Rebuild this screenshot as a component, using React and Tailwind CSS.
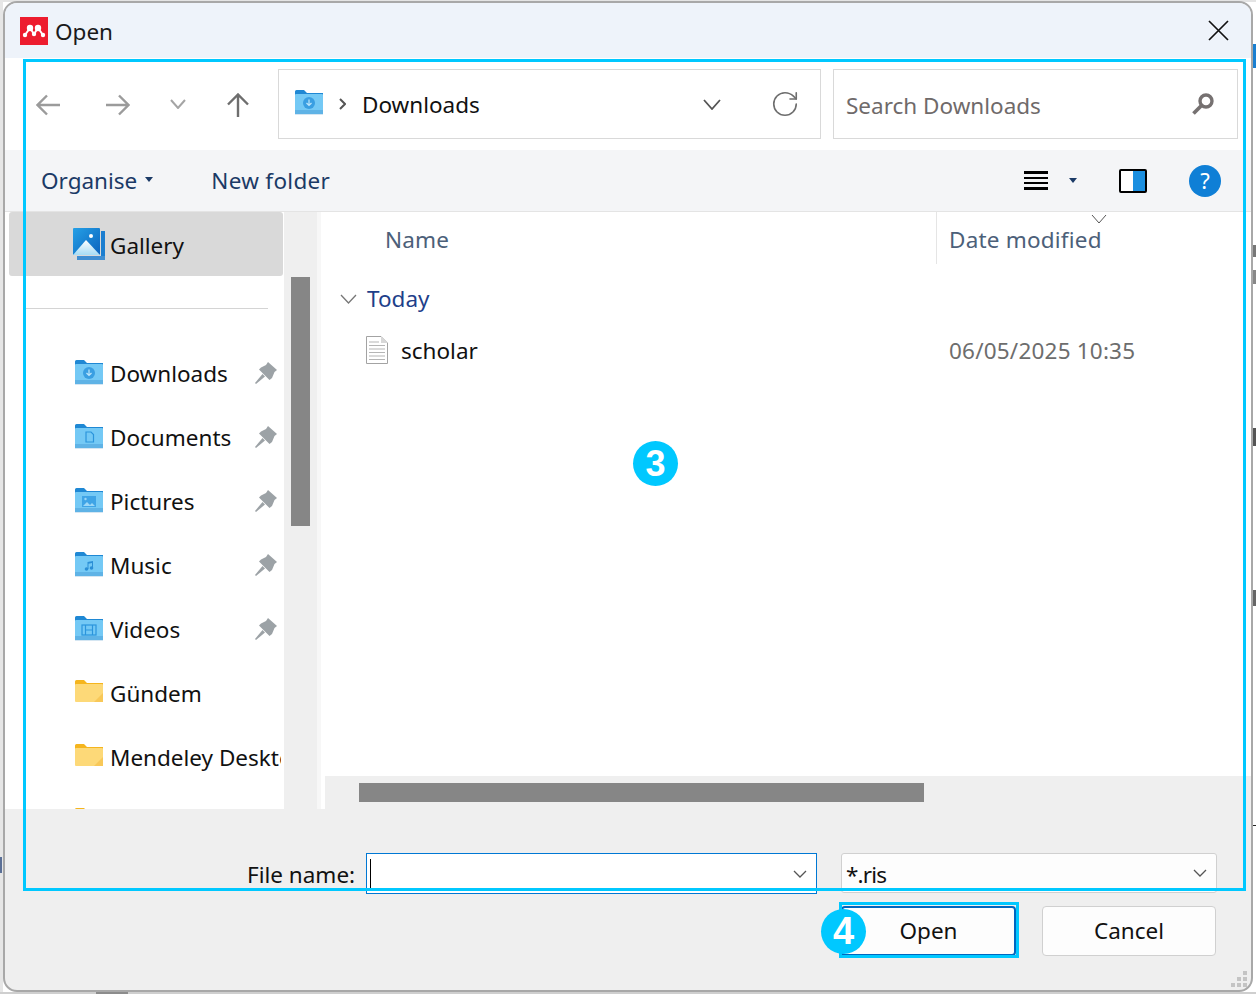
import React from "react";
import { RotateCw } from "lucide-react";

const font = { fontFamily: '"Noto Sans", sans-serif' };

// thin V chevron, sized by its drawn width
function Chev({ w = 16, color = "#555", sw = 1.3, className = "" }) {
  const h = Math.round(w * 0.6);
  return (
    <svg width={w} height={h} viewBox={`0 0 ${w} ${h}`} className={`shrink-0 ${className}`}>
      <path d={`M1 1 L${w / 2} ${h - 1} L${w - 1} 1`} fill="none" stroke={color} strokeWidth={sw} />
    </svg>
  );
}

function FolderIcon({ color = "blue", glyph }) {
  const yellow = color === "yellow";
  return (
    <svg width="28" height="26" viewBox="0 0 28 26" className="shrink-0 mb-[2px]">
      <path d="M0 1.5 Q0 0 1.5 0 H9 L12 3 H28 V8 H0 Z" fill={yellow ? "#f5b51e" : "#1f88d4"} />
      <rect x="0" y="4" width="28" height={yellow ? 18 : 20} rx="1" fill={yellow ? "#fdd978" : "#74c9f5"} />
      {!yellow && <rect x="0" y="20" width="28" height="4" fill="#5fb3e6" />}
      {!yellow && <rect x="0" y="24" width="28" height="1" fill="#d5e6f2" />}
      {yellow && <path d="M19 22 L28 13 V22 Z" fill="#f8c858" />}
      {glyph === "down" && (
        <g>
          <circle cx="14" cy="13" r="6" fill="#3a9fe2" />
          <path d="M14 9.5 V15 M11.5 13 L14 15.5 L16.5 13" stroke="#bfe6fb" strokeWidth="1.2" fill="none" />
        </g>
      )}
      {glyph === "doc" && (
        <path d="M11 8 H16 L18.5 10.5 V18 H11 Z" fill="none" stroke="#2b95dc" strokeWidth="1.2" />
      )}
      {glyph === "pic" && (
        <g>
          <rect x="7" y="8" width="14" height="11" fill="#3fa4e6" />
          <path d="M8 18 L12 14 L15 17 L17 15 L20 18 Z" fill="#9cd7f7" />
          <circle cx="10.5" cy="11" r="1.2" fill="#9cd7f7" />
        </g>
      )}
      {glyph === "music" && (
        <g fill="#2b8fd6">
          <circle cx="11.5" cy="17" r="1.8" />
          <circle cx="16.5" cy="16" r="1.8" />
          <path d="M12.5 17 V10 L18 9 V16 H17 V11 L13.5 11.7 V17 Z" />
        </g>
      )}
      {glyph === "video" && (
        <g fill="none" stroke="#2b95dc" strokeWidth="1.2">
          <rect x="7" y="9" width="14" height="10" />
          <path d="M10.5 9 V19 M17.5 9 V19 M10.5 14 H17.5" />
        </g>
      )}
    </svg>
  );
}

function PinIcon() {
  return (
    <svg width="22" height="22" viewBox="0 0 22 22" className="shrink-0 mr-[4px] mb-[3px]">
      <path d="M13 0 L22 8 L19.5 10 L17 16 L14.5 18 L4 7.5 L6 5.5 L11 3 Z" fill="#9ca2a6" />
      <path d="M7.5 12 L0 21 L1 22 L10 14.5 Z" fill="#9ca2a6" />
    </svg>
  );
}

function NavRow({ label, color, glyph, pinned }) {
  return (
    <div className="h-16 shrink-0 flex items-center pl-[70px] pr-[3px] whitespace-nowrap overflow-hidden">
      <FolderIcon color={color} glyph={glyph} />
      <span className="ml-[7px] flex-1 text-[22.5px] text-[#111] overflow-hidden">{label}</span>
      {pinned && <PinIcon />}
    </div>
  );
}

const places = [
  { label: "Downloads", glyph: "down", pinned: true },
  { label: "Documents", glyph: "doc", pinned: true },
  { label: "Pictures", glyph: "pic", pinned: true },
  { label: "Music", glyph: "music", pinned: true },
  { label: "Videos", glyph: "video", pinned: true },
  { label: "Gündem", color: "yellow" },
  { label: "Mendeley Desktop", color: "yellow" },
  { label: "", color: "yellow" },
];

export default function App() {
  return (
    <div className="relative w-[1256px] h-[994px] overflow-hidden bg-white" style={font}>
      {/* bits of the window behind the dialog */}
      <div className="absolute left-0 top-0 w-[1256px] h-[2px] bg-[#e4e4e4]" />
      <div className="absolute left-0 top-0 w-[3px] h-[994px] bg-[#e6e6e6]" />
      <div className="absolute left-0 top-[992px] w-[1256px] h-[2px] bg-[#cfcfcf]" />
      <div className="absolute left-[96px] top-[991px] w-[32px] h-[3px] bg-[#8c8c8c]" />
      <div className="absolute left-[1253px] top-[44px] w-[3px] h-[24px] bg-[#1a7fd0]" />
      <div className="absolute left-[1253px] top-[245px] w-[3px] h-[12px] bg-[#777]" />
      <div className="absolute left-[1253px] top-[270px] w-[3px] h-[14px] bg-[#888]" />
      <div className="absolute left-[1253px] top-[428px] w-[3px] h-[18px] bg-[#555]" />
      <div className="absolute left-[1253px] top-[590px] w-[3px] h-[16px] bg-[#666]" />
      <div className="absolute left-[1253px] top-[825px] w-[3px] h-[1px] bg-[#222]" />
      <div className="absolute left-0 top-[857px] w-[2px] h-[16px] bg-[#5a6f96]" />

      <div className="relative ml-[3px] mt-[1px] w-[1250px] h-[991px] rounded-[14px] border-2 border-[#a8a8a8] overflow-hidden flex flex-col bg-[#efefef]">
        {/* title bar */}
        <div className="h-[55px] shrink-0 bg-[#eef3fa] flex items-center pl-[15px] pr-[22px]">
          <svg width="28" height="28" viewBox="0 0 28 28" className="shrink-0">
            <rect width="28" height="28" fill="#ed1c2e" />
            <path d="M5 18 L10 11 L14 17 L18 11 L23 18" fill="none" stroke="#fff" strokeWidth="2" />
            <g fill="#fff">
              <circle cx="5" cy="18" r="2.2" />
              <circle cx="10" cy="11" r="3.2" />
              <circle cx="14" cy="17" r="2.2" />
              <circle cx="18" cy="11" r="3.2" />
              <circle cx="23" cy="18" r="2.2" />
            </g>
          </svg>
          <span className="ml-[7px] flex-1 pt-[2px] text-[22.5px] text-[#1a1a1a]">Open</span>
          <svg width="21" height="21" viewBox="0 0 21 21">
            <path d="M1 1 L20 20 M20 1 L1 20" stroke="#111" strokeWidth="1.7" />
          </svg>
        </div>

        {/* nav bar */}
        <div className="h-[92px] shrink-0 bg-white flex items-center pl-[31px] pr-[13px]">
          <svg width="24" height="22" viewBox="0 0 24 22" className="shrink-0 mt-[2px]">
            <path d="M24 11 H2 M11 1.5 L1.5 11 L11 20.5" fill="none" stroke="#9b9b9b" strokeWidth="2.4" />
          </svg>
          <svg width="24" height="22" viewBox="0 0 24 22" className="ml-[46px] shrink-0 mt-[2px]">
            <path d="M0 11 H22 M13 1.5 L22.5 11 L13 20.5" fill="none" stroke="#9b9b9b" strokeWidth="2.4" />
          </svg>
          <Chev w={16} color="#a5a5a5" sw={2} className="ml-[40px]" />
          <svg width="22" height="24" viewBox="0 0 22 24" className="ml-[41px] shrink-0 mt-[2px]">
            <path d="M11 24 V2 M1 11.5 L11 1.5 L21 11.5" fill="none" stroke="#6e6e6e" strokeWidth="2.4" />
          </svg>
          <div className="ml-[29px] w-[543px] h-[70px] border border-[#d9d9d9] flex items-center pl-[16px] pr-[20px]">
            <FolderIcon glyph="down" />
            <svg width="7" height="12" viewBox="0 0 7 12" className="ml-[16px] shrink-0">
              <path d="M1 1 L6 6 L1 11" fill="none" stroke="#555" strokeWidth="2" />
            </svg>
            <span className="ml-[16px] flex-1 pt-[2px] text-[22.5px] text-[#111]">Downloads</span>
            <Chev w={18} sw={1.8} />
            <RotateCw size={30} strokeWidth={1.3} className="ml-[49px] text-[#6e6e6e] shrink-0" />
          </div>
          <div className="ml-[12px] flex-1 h-[70px] border border-[#d9d9d9] flex items-center pl-[12px] pr-[22px]">
            <span className="flex-1 pt-[4px] text-[22.5px] text-[#6f6a6a]">Search Downloads</span>
            <svg width="24" height="24" viewBox="0 0 24 24">
              <circle cx="15" cy="9" r="6" fill="none" stroke="#767171" strokeWidth="3.4" />
              <path d="M10.5 13.5 L2.5 21.5" stroke="#767171" strokeWidth="3.8" />
            </svg>
          </div>
        </div>

        {/* toolbar */}
        <div className="h-[62px] shrink-0 bg-[#f4f5f7] border-b border-[#e4e4e4] flex items-center pl-[36px] pr-[30px] text-[22.5px] text-[#1b3a66]">
          <span>Organise</span>
          <svg width="8" height="5" viewBox="0 0 8 5" className="ml-[8px] mb-[3px]"><path d="M0 0 H8 L4 5 Z" fill="#1b3a66" /></svg>
          <span className="ml-[58px] flex-1 tracking-[0.3px]">New folder</span>
          <div className="flex flex-col gap-[3px] w-[24px]">
            <div className="h-[3px] bg-black" />
            <div className="h-[2px] bg-black" />
            <div className="h-[2px] bg-black" />
            <div className="h-[3px] bg-black" />
          </div>
          <svg width="8" height="5" viewBox="0 0 8 5" className="ml-[21px]"><path d="M0 0 H8 L4 5 Z" fill="#1b3a66" /></svg>
          <div className="ml-[42px] w-[28px] h-[24px] border-2 border-black rounded-[2px] bg-white flex justify-end">
            <div className="w-[12px] bg-[#1b8fe0]" />
          </div>
          <div className="ml-[42px] w-[32px] h-[32px] rounded-full bg-[#0f7fd6] text-white text-[22px] flex items-center justify-center">?</div>
        </div>

        {/* main */}
        <div className="h-[597px] shrink-0 flex overflow-hidden">
          <div className="w-[279px] shrink-0 bg-white flex flex-col overflow-hidden">
            <div className="h-16 shrink-0 ml-[4px] mr-[1px] bg-[#d9d9d9] rounded-[3px] flex items-center pl-[64px] text-[22.5px] text-[#111]">
              <svg width="32" height="32" viewBox="0 0 32 32" className="shrink-0">
                <defs>
                  <linearGradient id="sky" x1="0" y1="0" x2="1" y2="1">
                    <stop offset="0" stopColor="#25a0e6" />
                    <stop offset="1" stopColor="#0b63bd" />
                  </linearGradient>
                  <linearGradient id="peak" x1="0" y1="0" x2="0" y2="1">
                    <stop offset="0" stopColor="#ffffff" />
                    <stop offset="1" stopColor="#a5dcf5" />
                  </linearGradient>
                </defs>
                <rect x="28" y="3" width="4" height="29" fill="#1b7ed0" />
                <rect x="4" y="28" width="28" height="4" fill="#3f8ed2" />
                <rect x="0" y="0" width="27" height="27" rx="1" fill="url(#sky)" />
                <path d="M0 27 L13 12 L27 27 Z" fill="url(#peak)" />
                <circle cx="18" cy="8" r="2" fill="#fff" />
              </svg>
              <span className="ml-[5px] pt-[4px]">Gallery</span>
            </div>
            <div className="h-[66px] shrink-0 pt-[32px] pl-[19px] pr-[16px]">
              <div className="h-px bg-[#d4d4d4]" />
            </div>
            {places.map((p, i) => (
              <NavRow key={i} {...p} />
            ))}
          </div>

          <div className="w-[33px] shrink-0 bg-[#efefef] pl-[7px] pt-[65px]">
            <div className="w-[19px] h-[249px] bg-[#868686]" />
          </div>
          <div className="w-[4px] shrink-0 bg-[#f7f7f7]" />

          <div className="flex-1 bg-white flex flex-col min-w-0">
            <div className="flex-1 flex flex-col">
              <div className="h-[52px] shrink-0 flex text-[22.5px] text-[#4c6079] tracking-[0.2px]">
                <div className="w-[616px] shrink-0 flex items-center pt-[4px] pl-[64px] border-r border-[#e5e5e5]">Name</div>
                <div className="relative flex items-center pt-[4px] pl-[12px]">
                  Date modified
                  <Chev w={16} sw={1} className="absolute left-[154px] top-[2px]" />
                </div>
              </div>
              <div className="mt-[14px] h-[42px] flex items-center pl-[19px] text-[22.5px] text-[#1e3f8a]">
                <Chev w={17} color="#777" />
                <span className="ml-[10px]">Today</span>
              </div>
              <div className="mt-[10px] h-[40px] flex items-center pl-[45px] text-[22.5px]">
                <svg width="22" height="28" viewBox="0 0 22 28" className="shrink-0">
                  <path d="M.5.5 H15 L21.5 7 V27.5 H.5 Z" fill="#fff" stroke="#a3a3a3" />
                  <path d="M15 .5 V7 H21.5 Z" fill="#d8d8d8" />
                  <path d="M3 6 H13 M3 9.5 H19 M3 13 H19 M3 16.5 H19 M3 20 H19 M3 23.5 H19" stroke="#b5b5b5" />
                </svg>
                <span className="ml-[13px] w-[548px] pt-[2px] text-[#111]">scholar</span>
                <span className="pt-[2px] text-[#6d6d6d] tracking-[0.2px]">06/05/2025 10:35</span>
              </div>
            </div>
            <div className="h-[33px] shrink-0 ml-[4px] bg-[#efefef] pl-[34px] pt-[7px]">
              <div className="w-[565px] h-[19px] bg-[#868686]" />
            </div>
          </div>
        </div>

        {/* footer */}
        <div className="flex-1 flex flex-col pt-[44px]">
          <div className="flex items-start text-[22.5px] text-[#111]">
            <span className="ml-[242px] w-[119px] h-[41px] leading-[44px] whitespace-nowrap">File name:</span>
            <div className="w-[451px] h-[41px] border border-[#0078d4] bg-white flex items-center pl-[3px] pr-[9px]">
              <div className="w-px h-[30px] bg-black" />
              <div className="flex-1" />
              <Chev w={14} />
            </div>
            <div className="ml-[24px] w-[376px] h-[40px] border border-[#d0d0d0] rounded-[3px] bg-[#fdfdfd] flex items-center pl-[4px] pr-[9px]">
              <span className="flex-1 pt-[4px] leading-[44px] tracking-[-0.8px]">*.ris</span>
              <Chev w={14} />
            </div>
          </div>
          <div className="mt-[12px] flex text-[22.5px] text-[#111]">
            <div className="ml-[836px] w-[175px] h-[50px] border-2 border-[#0067c0] rounded-[4px] bg-[#fdfdfd] flex items-center justify-center">Open</div>
            <div className="ml-[26px] w-[174px] h-[50px] border border-[#d0d0d0] rounded-[4px] bg-[#fdfdfd] flex items-center justify-center">Cancel</div>
          </div>
        </div>
      </div>

      {/* resize grip */}
      <div className="absolute left-[1231px] top-[971px] grid grid-cols-3 gap-[2px] w-[16px]">
        <div /><div /><div className="h-[4px] bg-[#c4c4c4]" />
        <div /><div className="h-[4px] bg-[#c4c4c4]" /><div className="h-[4px] bg-[#c4c4c4]" />
        <div className="h-[4px] bg-[#c4c4c4]" /><div className="h-[4px] bg-[#c4c4c4]" /><div className="h-[4px] bg-[#c4c4c4]" />
      </div>

      {/* annotations drawn over the dialog */}
      <div className="absolute left-[23px] top-[59px] w-[1223px] h-[832px] border-[3px] border-[#00c8ff]" />
      <div className="absolute left-[633px] top-[441px] w-[45px] h-[45px] rounded-full bg-[#00c8ff] text-white font-bold text-[36px] leading-[45px] text-center" style={{ fontFamily: '"Liberation Sans", sans-serif' }}>3</div>
      <div className="absolute left-[839px] top-[902px] w-[180px] h-[56px] border-[3px] border-[#00c8ff]" />
      <div className="absolute left-[821px] top-[909px] w-[45px] h-[45px] rounded-full bg-[#00c8ff] text-white font-bold text-[38px] leading-[45px] text-center" style={{ fontFamily: '"Liberation Sans", sans-serif' }}>4</div>
    </div>
  );
}
